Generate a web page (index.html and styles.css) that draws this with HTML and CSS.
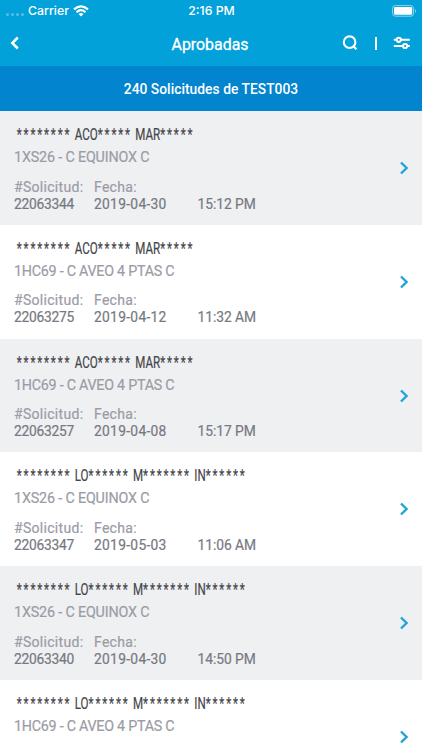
FILE: index.html
```
<!DOCTYPE html>
<html lang="es">
<head>
<meta charset="utf-8">
<title>Aprobadas</title>
<link rel="stylesheet" href="styles.css">
</head>
<body>
<svg class="defs" width="0" height="0"><symbol id="next" viewBox="0 0 10 14"><path d="M2 1.5 7.6 7 2 12.5" fill="none" stroke="currentColor" stroke-width="2.4"/></symbol></svg>
<header>
  <div class="status">
    <div class="carrier"><i class="signal"><b></b><b></b><b></b><b></b></i><span>Carrier</span>
      <svg width="16" height="12" viewBox="0 0 16 12"><g fill="none" stroke="#fff" stroke-width="2.1"><path d="M1 4.4Q8-1.8 15 4.4"/><path d="M3.5 7.2Q8 3.2 12.5 7.2"/></g><path d="M5.5 8.9Q8 7 10.5 8.9L8 11.5Z" fill="#fff"/></svg>
    </div>
    <time>2:16 PM</time>
    <svg class="battery" width="26" height="12" viewBox="0 0 26 12"><rect x="1.6" y=".6" width="21" height="10.6" rx="2.8" fill="none" stroke="#8ed5f0"/><rect x="3" y="2" width="18.2" height="7.8" rx="1.3" fill="#fff"/><path d="M24 4Q26 6 24 8Z" fill="#8ed5f0"/></svg>
  </div>
  <nav>
    <svg class="back" width="11" height="14" viewBox="0 0 11 14"><path d="M8.8 1.5 3.3 7 8.8 12.5" fill="none" stroke="#fff" stroke-width="2.5"/></svg>
    <h1>Aprobadas</h1>
    <div class="actions">
      <svg width="16" height="16" viewBox="0 0 16 16" fill="none" stroke="#fff" stroke-width="2.1"><circle cx="7.6" cy="7.2" r="5.8"/><path d="m10.8 10.8 3.7 3.5"/></svg>
      <i class="divider"></i>
      <svg width="18" height="14" viewBox="0 0 18 14" fill="none" stroke="#fff" stroke-width="2"><path d="M.8 3.8H3.8M8 3.8H16.8M.8 10H10M14.2 10H16.8"/><circle cx="5.8" cy="3.8" r="2.1"/><circle cx="12.1" cy="10" r="2.1"/></svg>
    </div>
  </nav>
</header>
<div class="banner"><span>240 Solicitudes de TEST003</span></div>
<main>
  <article><div class="name"><i>********</i> ACO<i>*****</i> MAR<i>*****</i></div><div class="model">1XS26 - C EQUINOX C</div><dl><div><dt>#Solicitud:</dt><dd class="id">22063344</dd></div><div><dt>Fecha:</dt><dd>2019-04-30</dd></div><div><dd class="time">15:12 PM</dd></div></dl><svg class="next"><use href="#next"/></svg></article>
  <article><div class="name"><i>********</i> ACO<i>*****</i> MAR<i>*****</i></div><div class="model long">1HC69 - C AVEO 4 PTAS C</div><dl><div><dt>#Solicitud:</dt><dd class="id">22063275</dd></div><div><dt>Fecha:</dt><dd>2019-04-12</dd></div><div><dd class="time">11:32 AM</dd></div></dl><svg class="next"><use href="#next"/></svg></article>
  <article><div class="name"><i>********</i> ACO<i>*****</i> MAR<i>*****</i></div><div class="model long">1HC69 - C AVEO 4 PTAS C</div><dl><div><dt>#Solicitud:</dt><dd class="id">22063257</dd></div><div><dt>Fecha:</dt><dd>2019-04-08</dd></div><div><dd class="time">15:17 PM</dd></div></dl><svg class="next"><use href="#next"/></svg></article>
  <article><div class="name"><i>********</i> LO<i>******</i> M<i>*******</i> IN<i>******</i></div><div class="model">1XS26 - C EQUINOX C</div><dl><div><dt>#Solicitud:</dt><dd class="id">22063347</dd></div><div><dt>Fecha:</dt><dd>2019-05-03</dd></div><div><dd class="time">11:06 AM</dd></div></dl><svg class="next"><use href="#next"/></svg></article>
  <article><div class="name"><i>********</i> LO<i>******</i> M<i>*******</i> IN<i>******</i></div><div class="model">1XS26 - C EQUINOX C</div><dl><div><dt>#Solicitud:</dt><dd class="id">22063340</dd></div><div><dt>Fecha:</dt><dd>2019-04-30</dd></div><div><dd class="time">14:50 PM</dd></div></dl><svg class="next"><use href="#next"/></svg></article>
  <article class="partial"><div class="name"><i>********</i> LO<i>******</i> M<i>*******</i> IN<i>******</i></div><div class="model long">1HC69 - C AVEO 4 PTAS C</div><svg class="next"><use href="#next"/></svg></article>
</main>
</body>
</html>
```
FILE: styles.css
```
* { box-sizing: border-box; }
body { margin: 0; height: 750px; overflow: hidden; background: #fff; font-family: Roboto, "Liberation Sans", sans-serif; }
svg { display: block; }
.defs { position: absolute; }
header { height: 65.5px; background: #02a1da; color: #fff; }
.status { height: 21px; display: grid; grid-template-columns: 1fr auto 1fr; align-items: center; padding: 0 5px 0 6px; font: 500 12.3px/20px Inter, sans-serif; }
.carrier { display: flex; align-items: center; }
.carrier span { margin: 0 4px 0 4px; }
.signal { display: flex; gap: 2px; padding-top: 7px; }
.signal b { width: 3px; height: 3px; border-radius: 50%; background: #55bfe6; }
.battery { justify-self: end; }
nav { height: 44.5px; display: grid; grid-template-columns: 1fr auto 1fr; align-items: center; padding: 0 11px 0 9px; }
h1 { margin: 0; padding-top: 3px; font-size: 15.9px; font-weight: 400; line-height: 20px; -webkit-text-stroke: .3px; }
.actions { display: flex; align-items: center; justify-content: flex-end; }
.divider { width: 2px; height: 13px; background: #fff; margin: 0 16px 0 17px; }
.banner { height: 45.7px; padding-top: 2px; background: #0284cf; color: #fff; display: flex; align-items: center; justify-content: center; font-size: 13.8px; font-weight: 500; letter-spacing: .03px; }
article { position: relative; height: 113.75px; padding: 13px 14px 0; background: #fff; }
article:nth-child(odd) { background: #eff0f2; }
article.partial { height: 70px; overflow: hidden; }
.name { width: 400px; padding-left: 4px; font-size: 17px; line-height: 20px; white-space: nowrap; word-spacing: .8px; color: #444549; transform: scaleX(.68); transform-origin: left; -webkit-text-stroke: .2px; }
.name i { font-style: normal; letter-spacing: 2.72px; }
.model { margin-top: 3px; font-size: 14.3px; line-height: 20px; letter-spacing: -.15px; color: #9b9ca6; white-space: nowrap; -webkit-text-stroke: .2px; }
.model.long { letter-spacing: -.25px; }
dl { margin: 11.5px 0 0; display: grid; grid-template-columns: 80px 103.5px 80px; align-items: end; line-height: 17px; white-space: nowrap; }
dt { font-size: 14px; color: #9b9ca6; letter-spacing: .3px; -webkit-text-stroke: .2px; }
dd { margin: 0; font-size: 13.8px; color: #777982; letter-spacing: .3px; -webkit-text-stroke: .2px; }
.id { letter-spacing: -.25px; }
.time { letter-spacing: -.05px; }
.next { position: absolute; right: 13.5px; top: 50px; width: 10px; height: 14px; color: #20a4d8; }
```
